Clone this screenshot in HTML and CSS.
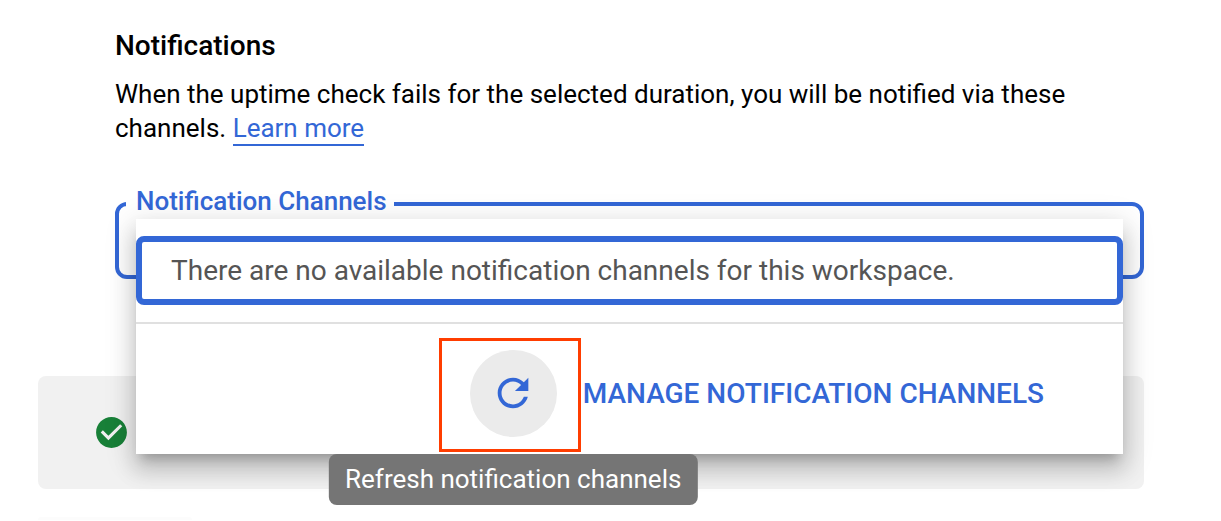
FILE: index.html
```html
<!DOCTYPE html>
<html lang="en">
<head>
    <meta charset="UTF-8">
    <meta name="viewport" content="width=device-width, initial-scale=1.0">
    <title>Notifications</title>
    <link rel="stylesheet" href="styles.css">
</head>
<body>
    <main class="page">
        <section class="notifications">
            <h2>Notifications</h2>
            <p>When the uptime check fails for the selected duration, you will be notified via these channels. <a class="learn-more" href="#">Learn more</a></p>

            <div class="channel-select">
                <fieldset class="channel-field">
                    <legend>Notification Channels</legend>
                </fieldset>

                <!-- Open dropdown panel -->
                <div class="panel">
                    <div class="empty-option">There are no available notification channels for this workspace.</div>
                    <div class="panel-footer">
                        <div class="refresh">
                            <button class="refresh-btn" type="button" aria-labelledby="refresh-tip">
                                <svg viewBox="0 0 24 24" width="46" height="46" aria-hidden="true">
                                    <path d="M17.65 6.35C16.2 4.9 14.21 4 12 4c-4.42 0-7.99 3.58-7.99 8s3.57 8 7.99 8c3.73 0 6.84-2.55 7.73-6h-2.08c-.82 2.33-3.04 4-5.65 4-3.31 0-6-2.69-6-6s2.69-6 6-6c1.66 0 3.14.69 4.22 1.78L13 11h7V4l-2.35 2.35z"/>
                                </svg>
                            </button>
                            <div class="tooltip" id="refresh-tip" role="tooltip">Refresh notification channels</div>
                        </div>
                        <a class="manage" href="#">Manage notification channels</a>
                    </div>
                </div>
            </div>
        </section>

        <div class="status">
            <svg viewBox="0 0 24 24" width="37" height="37" aria-hidden="true">
                <path d="M12 2C6.48 2 2 6.48 2 12s4.48 10 10 10 10-4.48 10-10S17.52 2 12 2zm-2 15l-5-5 1.41-1.41L10 14.17l7.59-7.59L19 8l-9 9z"/>
            </svg>
        </div>
        <div class="next-card"></div>
    </main>
</body>
</html>
```
FILE: styles.css
```css
* {
    box-sizing: border-box;
}
body {
    margin: 0;
    font-family: Roboto, sans-serif;
    font-size: 26px;
    line-height: 34px;
    color: #000;
    background-color: #fff;
}
.page {
    padding: 29px 77px 0 38px;
}
.notifications {
    padding-left: 77px;
}
h2 {
    margin: 0 0 14px;
    font-size: 28px;
    font-weight: 500;
}
p {
    margin: 0 0 39px;
}
a {
    color: #3367d6;
    text-decoration: none;
}
.learn-more {
    padding-bottom: 1px;
    border-bottom: 2px solid #3367d6;
}
.channel-select {
    position: relative;
    margin-bottom: 97px;
}
.channel-field {
    height: 95px;
    margin: 0;
    padding: 0 7px;
    border: 4px solid #3367d6;
    border-radius: 12px;
}
.channel-field legend {
    padding: 0 7px 6px 10px;
    font-weight: 500;
    color: #3367d6;
}
.panel {
    position: absolute;
    top: 35px;
    left: 21px;
    right: 21px;
    z-index: 1;
    padding-top: 17px;
    background-color: #fff;
    box-shadow: 0 10px 10px -6px rgba(0, 0, 0, 0.2),
        0 16px 20px 2px rgba(0, 0, 0, 0.14),
        0 6px 28px 4px rgba(0, 0, 0, 0.12);
}
.empty-option {
    margin-bottom: 17px;
    padding: 12px 29px 11px;
    border: 6px solid #3367d6;
    border-radius: 8px;
    font-size: 28px;
    color: #555;
}
.panel-footer {
    display: flex;
    justify-content: flex-end;
    align-items: center;
    gap: 26px;
    height: 132px;
    padding: 8px 79px 0 0;
    border-top: 2px solid #e0e0e0;
}
.refresh {
    position: relative;
}
/* red callout around the refresh button */
.refresh::before {
    content: "";
    position: absolute;
    top: -12px;
    right: -24px;
    bottom: -15px;
    left: -31px;
    border: 3px solid #ff3d00;
    pointer-events: none;
}
.refresh-btn {
    display: flex;
    justify-content: center;
    align-items: center;
    width: 87px;
    height: 87px;
    padding: 0;
    border: none;
    border-radius: 50%;
    background-color: #ebebeb;
    cursor: pointer;
}
.refresh-btn svg {
    fill: #3367d6;
}
.tooltip {
    position: absolute;
    top: 104px;
    left: 50%;
    transform: translateX(-50%);
    padding: 8px 16px 9px;
    border-radius: 8px;
    background-color: #757575;
    color: #fff;
    white-space: nowrap;
}
.manage {
    padding-top: 2px;
    font-size: 28px;
    font-weight: 500;
    text-transform: uppercase;
}
.status {
    display: flex;
    align-items: center;
    height: 113px;
    padding-left: 55px;
    border-radius: 8px;
    background-color: #f1f1f1;
}
.status svg {
    fill: #188038;
}
.next-card {
    width: 154px;
    height: 3px;
    margin-top: 28px;
    border-radius: 8px 8px 0 0;
    background-color: #fcfcfc;
}
```
